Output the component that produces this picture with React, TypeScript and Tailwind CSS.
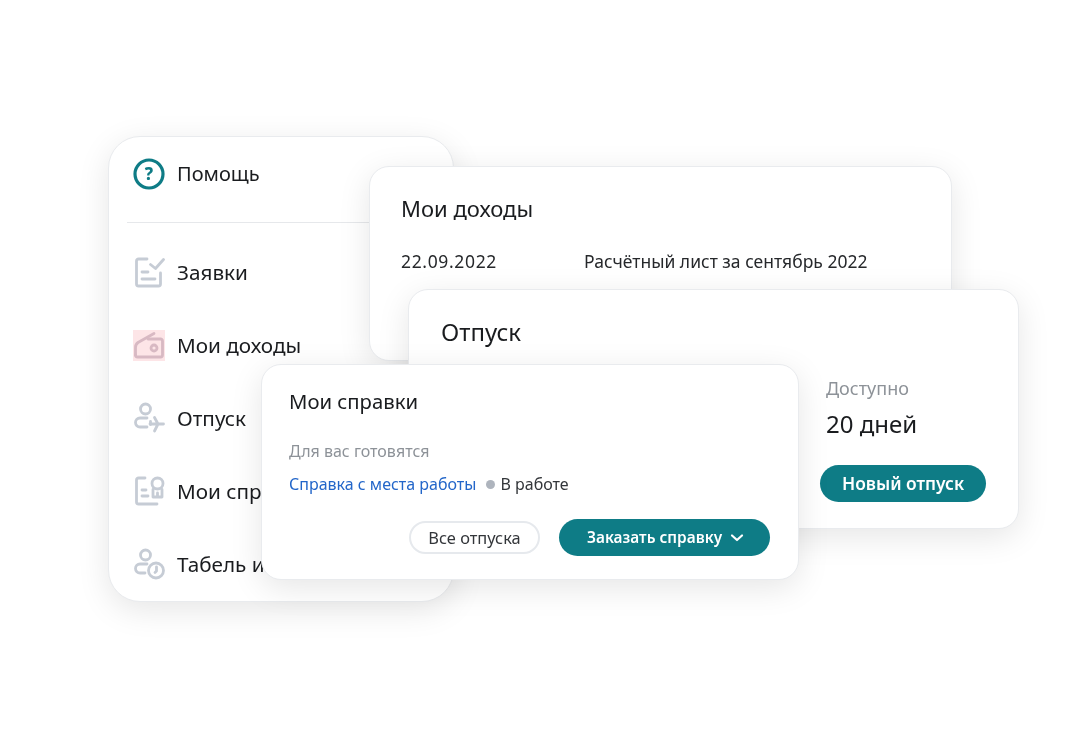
const Ic = ({ children }: { children: React.ReactNode }) => (
  <svg viewBox="0 0 32 32" className="w-8 h-8 shrink-0" fill="none" stroke="#c6ccd5" strokeWidth="2.800" strokeLinecap="round" strokeLinejoin="round">
    {children}
  </svg>
);

const rows = [
  {
    label: "Заявки",
    icon: (
      <Ic>
        <path d="M14 3H5.500a2 2 0 0 0-2 2v23a2 2 0 0 0 2 2h20a2 2 0 0 0 2-2V17" />
        <path d="M17.500 8.500l5 4L30.500 3.500" />
        <path d="M9 16h6M9 23h13" />
      </Ic>
    ),
  },
  {
    label: "Мои доходы",
    icon: (
      <div className="w-8 h-[31px] bg-[#fde5e7] flex items-center justify-center shrink-0">
        <svg viewBox="0 0 32 31" className="w-8 h-[31px]" fill="none" stroke="#d8b9c3" strokeWidth="2.800" strokeLinecap="round" strokeLinejoin="round">
          <path d="M2.500 25V17.500a6 6 0 0 1 2.500-5L21 3.500" />
          <path d="M2.500 25a2 2 0 0 0 2 2h23a2 2 0 0 0 2-2V11a2 2 0 0 0-2-2H15" />
          <circle cx="21" cy="18" r="3" />
        </svg>
      </div>
    ),
  },
  {
    label: "Отпуск",
    icon: (
      <Ic>
        <circle cx="12.500" cy="7" r="5" />
        <path d="M14 16H7a4.500 4.500 0 0 0-4.500 4.500v0A4.500 4.500 0 0 0 7 25h7" />
        <path d="M17 22h13.500M21.500 15.500L25 22l-3.500 7" />
        <path d="M17.500 19.500v3" />
      </Ic>
    ),
  },
  {
    label: "Мои справки",
    icon: (
      <Ic>
        <path d="M12 3H5.500a2 2 0 0 0-2 2v22a2 2 0 0 0 2 2H24" />
        <circle cx="24.500" cy="8.500" r="5.500" />
        <path d="M20 14.500V22h9v-7.500M24.500 18v4" />
        <path d="M9 15h4M9 21h6" />
      </Ic>
    ),
  },
  {
    label: "Табель и график",
    icon: (
      <Ic>
        <circle cx="12.500" cy="7" r="5" />
        <path d="M14 16H7a4.500 4.500 0 0 0-4.500 4.500v0A4.500 4.500 0 0 0 7 25h5" />
        <circle cx="23" cy="22.500" r="7.500" />
        <path d="M23.500 19v4l-1.500 1.500" />
      </Ic>
    ),
  },
];

const card = "absolute bg-white border border-[#e9ebee] shadow-[0_8px_32px_rgba(0,0,0,0.1)] flex flex-col";

export default function App() {
  return (
    <div className="relative w-[1080px] h-[740px] overflow-hidden bg-white text-[#1a1c1f] font-['Noto_Sans',sans-serif] blur-[0.45px]">
      {/* Меню */}
      <div className={card + " left-[108px] top-[136px] w-[346px] h-[466px] rounded-[32px] pl-[24px] pt-[21px]"}>
        <div className="flex items-center gap-[12px] h-[32px]">
          <svg viewBox="0 0 32 32" className="w-8 h-8 shrink-0">
            <circle cx="16" cy="16" r="14" fill="none" stroke="#0e7c86" strokeWidth="3.200" />
            <text x="16" y="22" textAnchor="middle" fontSize="17" fontWeight="800" fill="#0e7c86" fontFamily="Noto Sans">?</text>
          </svg>
          <span className="text-[20px] leading-[32px]">Помощь</span>
        </div>
        <div className="h-px bg-[#e6e8eb] mt-[32px] -ml-[6px]" />
        <div className="flex flex-col gap-[41px] mt-[33px]">
          {rows.map((r) => (
            <div key={r.label} className="flex items-center gap-[12px] h-[32px]">
              {r.icon}
              <span className="text-[20.700px] leading-[32px] whitespace-nowrap">{r.label}</span>
            </div>
          ))}
        </div>
      </div>

      {/* Мои доходы */}
      <div className={card + " left-[369px] top-[166px] w-[583px] h-[195px] rounded-[20px] pl-[31px] pt-[25px]"}>
        <div className="text-[22px] leading-[32px]">Мои доходы</div>
        <div className="flex mt-[23px] text-[17.500px] leading-[28px] text-[#26282b]">
          <span className="w-[183px] tracking-[0.65px]">22.09.2022</span>
          <span>Расчётный лист за сентябрь 2022</span>
        </div>
      </div>

      {/* Отпуск */}
      <div className={card + " left-[408px] top-[289px] w-[611px] h-[240px] rounded-[20px] pl-[32px] pt-[25px]"}>
        <div className="text-[24px] leading-[34px]">Отпуск</div>
        <div className="flex flex-1 justify-end pr-[33px] pt-[26px]">
          <div className="relative flex flex-col w-[165px] items-start">
            <div className="absolute -left-[45px] top-[90px] w-[24px] h-[37px] rounded-full border border-[#d8dce1]" />
            <div className="relative text-[18px] leading-[26px] text-[#8d9298] ml-[6px]">Доступно</div>
            <div className="relative text-[24px] leading-[34px] mt-[6px] ml-[6px]">20 дней</div>
            <button className="relative mt-[24px] w-[166px] h-[37px] rounded-full bg-[#0e7c86] text-white text-[17.400px] font-semibold leading-[37px]">
              Новый отпуск
            </button>
          </div>
        </div>
      </div>

      {/* Мои справки */}
      <div className={card + " left-[261px] top-[364px] w-[538px] h-[216px] rounded-[20px] pl-[27px] pr-[28px] pt-[22px]"}>
        <div className="text-[20.300px] leading-[28px]">Мои справки</div>
        <div className="text-[16px] leading-[22px] text-[#8d9298] mt-[25px]">Для вас готовятся</div>
        <div className="flex items-center text-[16px] leading-[22px] mt-[11px]">
          <span className="text-[#2366c9]">Справка с места работы</span>
          <span className="w-[9px] h-[9px] rounded-full bg-[#aeb4bd] ml-[10px] mr-[5px]" />
          <span className="text-[#33363a]">В работе</span>
        </div>
        <div className="flex justify-end items-center gap-[19px] mt-[24px]">
          <button className="w-[131px] h-[33px] rounded-full border-2 border-[#e6e9ed] text-[16.400px] leading-[28px] text-[#33363a]">Все отпуска</button>
          <button className="w-[211px] h-[37px] rounded-full bg-[#0e7c86] text-white text-[15.400px] font-semibold flex items-center justify-center gap-[8px] pl-[2px]">
            Заказать справку
            <svg viewBox="0 0 14 10" className="w-[14px] h-[10px]" fill="none" stroke="white" strokeWidth="2.200" strokeLinecap="round" strokeLinejoin="round">
              <path d="M2 2.500l5 4.500 5-4.500" />
            </svg>
          </button>
        </div>
      </div>
    </div>
  );
}
